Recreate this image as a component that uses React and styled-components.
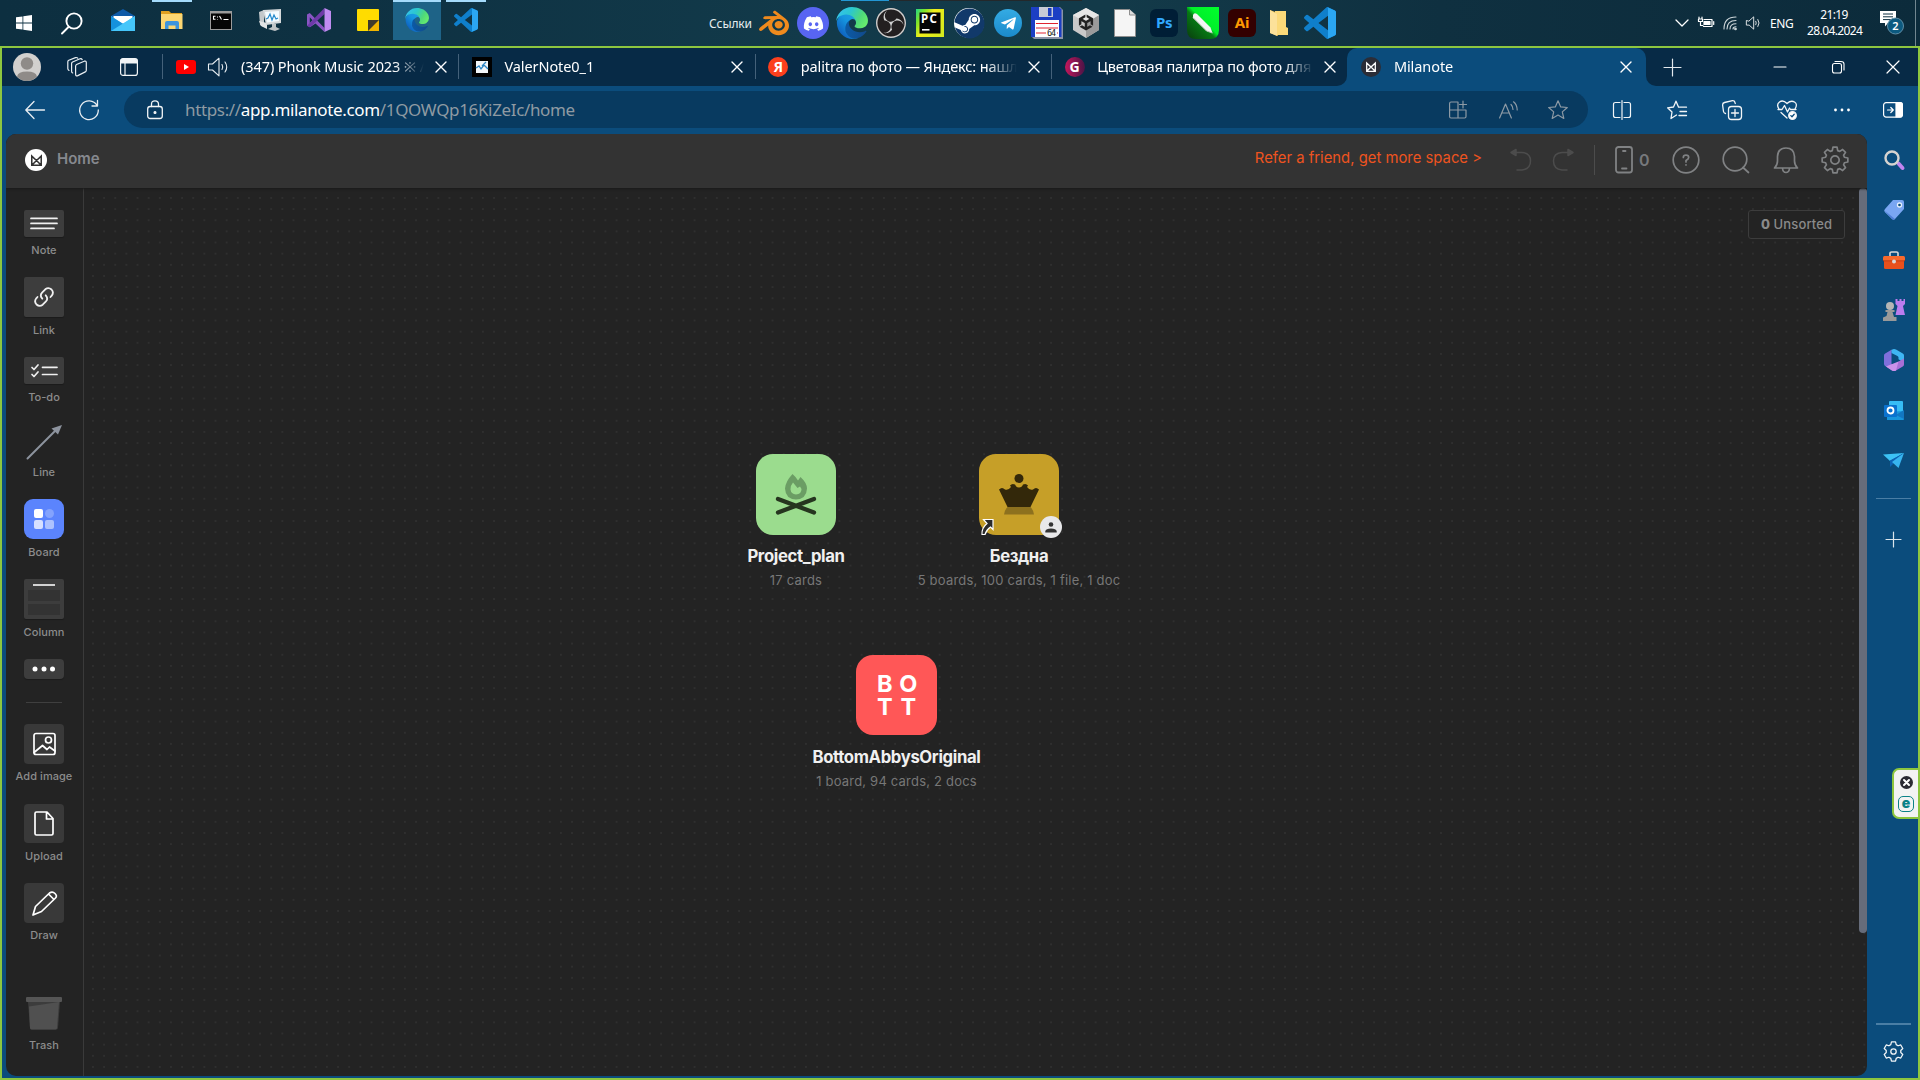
import React, { useId } from "react";
import styled, { createGlobalStyle } from "styled-components";
import { FaDiscord, FaSteam, FaTelegramPlane } from "react-icons/fa";
import { SiBlender, SiObsstudio, SiUnity } from "react-icons/si";

const SYSTEM = `"Noto Sans", "Open Sans", sans-serif`;
const PAGE = `Inter, "Noto Sans", sans-serif`;

const Global = createGlobalStyle`
  *, *::before, *::after { box-sizing: border-box; }
  html, body { margin: 0; padding: 0; background: #0d2f40; overflow: hidden; }
  svg { display: block; flex: none; overflow: visible; }
`;

/* ---------- shell ---------- */

const Desktop = styled.div`
  width: 1920px;
  height: 1080px;
  display: flex;
  flex-direction: column;
  font-family: ${SYSTEM};
  color: #fff;
  overflow: hidden;
`;

const Row = styled.div`
  display: flex;
  align-items: center;
`;

const Slot = styled.div`
  width: ${(p) => p.$w}px;
  height: 100%;
  flex: none;
  display: flex;
  align-items: center;
  justify-content: center;
`;

const Spacer = styled.div`
  flex: 1;
`;

/* ---------- taskbar ---------- */

const Taskbar = styled.header`
  height: 46px;
  flex: none;
  display: flex;
  background: linear-gradient(90deg, #0d2f40 0%, #0e3142 18%, #123a4a 42%, #133a49 58%, #0f3040 75%, #0c2b3b 100%);
`;

const TaskButton = styled.div`
  width: 48px;
  height: 40px;
  margin-right: ${(p) => (p.$flush ? 0 : 1)}px;
  flex: none;
  display: flex;
  align-items: center;
  justify-content: center;
  border-top: 2px solid ${(p) => (p.$active ? "#a5dbfb" : "transparent")};
  background: ${(p) => (p.$active ? "#1e6387" : "transparent")};
  padding-bottom: 2px;
`;

const SystemButton = styled(TaskButton)`
  border-top: 0;
  padding: 6px 0 0;
`;

const RunningButton = styled(TaskButton)`
  border-top: 0;
  padding: 0;
  background: linear-gradient(#a5dbfb, #a5dbfb) 4px 0 / 40px 2px no-repeat;
`;

const LinksBar = styled.div`
  margin-left: 218px;
  height: 46px;
  display: flex;
  align-items: center;
  background: linear-gradient(90deg, #2396d4 48px, #23282b 48px) 132px 0 / 241px 1px no-repeat;
`;

const LinksLabel = styled.span`
  width: 45.5px;
  font-size: 12px;
  letter-spacing: -0.1px;
  white-space: nowrap;
  color: #e6edf0;
`;

const AppBadge = styled.div`
  width: 28px;
  height: 28px;
  border-radius: 6px;
  background: ${(p) => p.$bg};
  color: ${(p) => p.$fg};
  font: 700 15px/26px ${SYSTEM};
  letter-spacing: -0.3px;
  text-align: center;
`;

const RoundBadge = styled.div`
  width: ${(p) => p.$d}px;
  height: ${(p) => p.$d}px;
  flex: none;
  border-radius: 50%;
  background: ${(p) => p.$bg};
  color: #fff;
  display: flex;
  align-items: center;
  justify-content: center;
`;

const Language = styled.span`
  width: 23px;
  margin: 0 14px 0 7px;
  font-size: 12px;
  letter-spacing: -0.45px;
`;

const Clock = styled.div`
  width: 54px;
  font-size: 12px;
  line-height: 16px;
  letter-spacing: -0.6px;
  text-align: center;
  white-space: nowrap;
`;

const ShowDesktop = styled.div`
  width: 5px;
  height: 46px;
  border-left: 1px solid #718690;
`;

/* ---------- browser ---------- */

const Browser = styled.section`
  flex: 1;
  min-height: 0;
  display: flex;
  flex-direction: column;
  border: 2px solid #8dc63f;
  background: #0b4c7c;
`;

const TabStrip = styled.div`
  height: 38px;
  flex: none;
  display: flex;
`;

const TabsLeft = styled.div`
  width: 1345.4px;
  display: flex;
  align-items: center;
  background: #072a46;
  border-radius: 0 0 10px 0;
`;

const WindowButtons = styled.div`
  flex: 1;
  display: flex;
  align-items: center;
  background: #072a46;
  border-radius: 0 0 0 10px;
`;

const ActiveBack = styled.div`
  width: 298.6px;
  background: linear-gradient(#072a46 12px, transparent 12px);
`;

const Tab = styled.div`
  width: 296.4px;
  height: 100%;
  flex: none;
  display: flex;
  align-items: center;
  padding-left: 13.5px;
  background: linear-gradient(#44617a, #44617a) 0 6px / 1px 25px no-repeat;
`;

const ActiveTab = styled(Tab)`
  width: 298.6px;
  padding-left: 14px;
  background: #0b4c7c;
  border-radius: 10px 10px 0 0;
`;

const TabTitle = styled.span`
  flex: 1;
  margin-left: ${(p) => p.$gap ?? 12.5}px;
  margin-top: -3px;
  font-size: 14.5px;
  line-height: 24px;
  letter-spacing: ${(p) => p.$ls ?? -0.08}px;
  white-space: nowrap;
  overflow: hidden;
  mask-image: linear-gradient(90deg, #000 calc(100% - 30px), transparent);
`;

const TabClose = styled.div`
  width: 33px;
  height: 38px;
  flex: none;
  margin-right: ${(p) => p.$mr ?? 1}px;
  display: flex;
  align-items: center;
  justify-content: center;
`;

const SmallLetter = styled.span`
  font: 700 14px/20px ${SYSTEM};
`;

const Toolbar = styled.div`
  height: 48px;
  flex: none;
  display: flex;
  padding-top: 5px;
`;

const ToolGroup = styled.div`
  height: 37px;
  display: flex;
  align-items: center;
`;

const AddressBar = styled.div`
  width: 1464px;
  height: 37px;
  border-radius: 19px;
  background: #083a60;
  display: flex;
  align-items: center;
  padding: 0 5px 0 0;
`;

const Url = styled.span`
  font-size: 17px;
  letter-spacing: -0.35px;
  color: #8f9aa3;
  white-space: nowrap;
  b { font-weight: 400; color: #fff; }
`;

const Content = styled.div`
  flex: 1;
  min-height: 0;
  display: flex;
  padding: 0 0 2px 4px;
`;

const EdgeRail = styled.aside`
  width: 51px;
  display: flex;
  flex-direction: column;
  align-items: center;
`;

const RailSlot = styled.div`
  width: 51px;
  height: ${(p) => p.$h ?? 50}px;
  padding: 2px 0 0 2px;
  flex: none;
  display: flex;
  align-items: center;
  justify-content: center;
`;

const RailRule = styled.div`
  width: 35px;
  height: ${(p) => p.$t ?? 1}px;
  flex: none;
  margin-left: 1px;
  margin-top: ${(p) => p.$mt ?? 0}px;
  background: #4a7ea5;
`;

const FloatingTab = styled.div`
  position: absolute;
  left: 1892px;
  top: 768px;
  width: 26px;
  height: 51px;
  border: 2px solid #8dc63f;
  border-right: 0;
  border-radius: 7px 0 0 7px;
  background: #f3f3f3;
  display: flex;
  flex-direction: column;
  align-items: center;
  padding: 6px 0 0 0;
  gap: 7px;
`;

const EMark = styled.div`
  width: 16px;
  height: 16px;
  border: 1.5px solid #0b8288;
  border-radius: 5px;
  color: #0b8288;
  font: 900 14px/11px ${PAGE};
  text-align: center;
`;

/* ---------- milanote page ---------- */

const Page = styled.main`
  width: 1861px;
  display: flex;
  flex-direction: column;
  border-radius: 10px;
  overflow: hidden;
  background: #232323;
  font-family: ${PAGE};
`;

const PageHeader = styled.div`
  height: 54px;
  flex: none;
  display: flex;
  align-items: center;
  padding: 0 8px 2px 19px;
  background: #333;
  box-shadow: 0 1px 2px #1a1a1a;
  z-index: 1;
`;

const Crumb = styled.span`
  margin-left: 10px;
  margin-top: -3px;
  font-size: 15px;
  font-weight: 600;
  color: #86898f;
`;

const Refer = styled.a`
  margin: -4px 18px 0 0;
  font-size: 14.8px;
  letter-spacing: 0.02px;
  color: #ee531f;
`;

const HeaderRule = styled.div`
  width: 1px;
  height: 30px;
  margin-left: 10px;
  background: #4c4c4c;
`;

const PhoneCount = styled.div`
  width: 66px;
  padding-left: 20px;
  display: flex;
  align-items: center;
  gap: 6px;
  font-size: 16px;
  font-weight: 600;
  color: #77797c;
`;

const Workspace = styled.div`
  flex: 1;
  min-height: 0;
  display: flex;
`;

const ToolRail = styled.nav`
  width: 78px;
  flex: none;
  display: flex;
  flex-direction: column;
  align-items: center;
  padding: 22px 1px 0 0;
  border-right: 1px solid #3a3a3a;
`;

const Tool = styled.div`
  width: 76px;
  display: flex;
  flex-direction: column;
  align-items: center;
  padding-bottom: ${(p) => p.$after ?? 19}px;
`;

const ToolBox = styled.div`
  width: 40px;
  height: ${(p) => p.$h ?? 40}px;
  border-radius: ${(p) => p.$r ?? 2}px;
  background: ${(p) => p.$bg ?? "#3d3d3d"};
  box-shadow: ${(p) => (p.$bg ? "none" : "0 1px 1px rgba(0,0,0,.25)")};
  display: flex;
  align-items: center;
  justify-content: center;
`;

const ToolLabel = styled.span`
  margin-top: ${(p) => p.$mt ?? 5}px;
  height: 16px;
  font-size: 11px;
  font-weight: 500;
  line-height: 16px;
  letter-spacing: 0.05px;
  color: #8c8c8c;
  white-space: nowrap;
`;

const RailDivider = styled.div`
  width: 36px;
  height: 1px;
  margin: 23px 0 21px;
  background: #3f3f3f;
`;

const Canvas = styled.div`
  position: relative;
  flex: 1;
  background: radial-gradient(circle at center, #2f2f2f 0.7px, rgba(47, 47, 47, 0) 1.4px) 3.4px 4.4px / 11.154px 11.15px;
`;

const ScrollTrack = styled.div`
  position: absolute;
  right: 0;
  top: 0;
  width: 8px;
  height: 745px;
  border-radius: 4px;
  background: #666c7a;
`;

const Unsorted = styled.button`
  position: absolute;
  right: 22px;
  top: 22px;
  width: 97px;
  height: 29px;
  padding: 0;
  border: 1px solid #3c3c3c;
  border-radius: 3px;
  background: #232323;
  color: #8a8a8a;
  font: 500 13px/25px ${PAGE};
  letter-spacing: 0.12px;
  b { font-weight: 800; }
`;

const BoardNode = styled.article`
  position: absolute;
  left: ${(p) => p.$x}px;
  top: ${(p) => p.$y}px;
  width: 240px;
  display: flex;
  flex-direction: column;
  align-items: center;
`;

const BoardTile = styled.div`
  position: relative;
  width: ${(p) => p.$w ?? 80}px;
  height: ${(p) => p.$h ?? 81}px;
  border-radius: 17px;
  background: ${(p) => p.$bg};
  display: flex;
  align-items: center;
  justify-content: center;
`;

const BoardTitle = styled.h2`
  margin: ${(p) => p.$mt ?? 9}px 0 0;
  font-size: 16.7px;
  font-weight: 700;
  line-height: 24px;
  letter-spacing: -0.36px;
  color: #f0f0f0;
`;

const BoardMeta = styled.p`
  margin: 3.5px 0 0;
  font-size: 13px;
  line-height: 16px;
  letter-spacing: 0.2px;
  color: #777;
  white-space: nowrap;
`;

const Letters = styled.div`
  display: grid;
  grid-template-columns: 23.5px 23.5px;
  grid-auto-rows: 23px;
  font: 700 23.5px/23px ${PAGE};
  text-align: center;
  color: #fff;
`;

const Shortcut = styled.div`
  position: absolute;
  left: 1px;
  bottom: -1px;
`;

const SharedBadge = styled.div`
  position: absolute;
  right: -3px;
  bottom: -3px;
  width: 22px;
  height: 22px;
  border-radius: 50%;
  background: #e8e8ea;
  display: flex;
  align-items: center;
  justify-content: center;
`;

/* ---------- drawings ---------- */

const Line = ({ w = 20, h = w, vb = `0 0 ${w} ${h}`, c = "#e9eef2", sw = 1.2, children }) => (
  <svg width={w} height={h} viewBox={vb} fill="none" stroke={c} strokeWidth={sw} strokeLinecap="round" strokeLinejoin="round">
    {children}
  </svg>
);

const Cross = ({ s = 10, sw = 1.4 }) => (
  <Line w={s} vb="0 0 10 10" sw={sw} c="#fff"><path d="M0 0l10 10M10 0L0 10" /></Line>
);

const EdgeLogo = ({ s }) => {
  const id = useId();
  return (
    <svg width={s} height={s} viewBox="-2 5 256 256">
      <defs>
        <linearGradient id={id + "a"} x1="0.1" x2="1" y1="0.6" y2="0.6"><stop offset="0" stopColor="#0c59a4" /><stop offset="1" stopColor="#114a8b" /></linearGradient>
        <linearGradient id={id + "b"} x1="0.9" x2="0.3" y1="0.2" y2="0.9"><stop offset="0" stopColor="#1b9de2" /><stop offset=".4" stopColor="#1595df" /><stop offset="1" stopColor="#0f62c0" /></linearGradient>
        <linearGradient id={id + "c"} x1="0" x2="1" y1="0.2" y2="0.6"><stop offset="0" stopColor="#35c1f1" /><stop offset=".4" stopColor="#2cc7cf" /><stop offset=".75" stopColor="#4fd97a" /><stop offset="1" stopColor="#66eb6e" /></linearGradient>
      </defs>
      <path fill={`url(#${id}a)`} d="M235.7 195.5a94 94 0 0 1-10.5 4.7 102 102 0 0 1-35.9 6.4c-47.3 0-88.5-32.5-88.5-74.3A31.5 31.5 0 0 1 117.1 105c-42.8 1.8-53.8 46.4-53.8 72.5 0 73.9 68.1 81.4 82.8 81.4 7.9 0 19.8-2.3 27-4.6l1.3-.4a128.3 128.3 0 0 0 66.6-52.8 4 4 0 0 0-5.3-5.6z" />
      <path fill={`url(#${id}b)`} d="M110.3 246.3A79.2 79.2 0 0 1 87.6 225a80.7 80.7 0 0 1 29.5-120c3.1-1.5 8.5-4.1 15.5-4a32.3 32.3 0 0 1 25.7 13 31.9 31.9 0 0 1 6.4 18.7c0-.2 24.5-79.6-80-79.6-43.9 0-80 41.7-80 78.2a130 130 0 0 0 12.1 56 128 128 0 0 0 156.4 67.1 75.5 75.5 0 0 1-62.9-8z" />
      <path fill={`url(#${id}c)`} d="M149.9 153.8c-.8 1-3.3 2.5-3.3 5.6 0 2.6 1.7 5.1 4.7 7.2 14.4 10 41.5 8.7 41.6 8.7a59.5 59.5 0 0 0 30.3-8.3A61.4 61.4 0 0 0 253.6 114c.3-22.4-8-37.3-11.3-43.9C221 28.8 175.6 5 125.8 5A128 128 0 0 0-2 131.2c.5-36.5 36.8-66 80-66 3.5 0 23.5.3 42 10 16.3 8.6 24.9 19 30.8 29.2 6.2 10.7 7.3 24.2 7.3 29.5 0 5.4-2.7 13.4-8.2 19.9z" />
    </svg>
  );
};

const CodeLogo = ({ s }) => (
  <svg width={s} height={s} viewBox="0 0 24 24">
    <path fill="#0f7fcb" d="M23.15 2.587L18.21.21a1.494 1.494 0 0 0-1.705.29l-9.46 8.63-4.12-3.128a1 1 0 0 0-1.276.057L.327 7.261A1 1 0 0 0 .326 8.74L3.899 12 .326 15.26a1 1 0 0 0 .001 1.479L1.65 17.94a1 1 0 0 0 1.276.057l4.12-3.128 9.46 8.63a1.492 1.492 0 0 0 1.704.29l4.942-2.377A1.5 1.5 0 0 0 24 20.06V3.939a1.5 1.5 0 0 0-.85-1.352zm-5.146 14.861L10.826 12l7.178-5.448v10.896z" />
    <path fill="#2ba6f2" d="M17.6 0.1L23.15 2.587Q24 3 24 3.94V20.06Q24 21 23.15 21.41L17.6 23.9Q18 23.5 18 22.5V1.5Q18 .5 17.6 .1Z" />
  </svg>
);

const StudioLogo = () => (
  <svg width="24" height="24" viewBox="0 0 24 24">
    <path fill="#8a55c4" d="M0 6.5L2.8 5 17.5 20V24L8.5 15.5 3 19.2 0 17.8ZM2.8 9.2V15L5.6 12.2Z" />
    <path fill="#6d3aa8" d="M2.8 19.2L0 17.8 17.5 0V6L5 17.5Z" />
    <path fill="#c08cf2" d="M17.5 0L24 3V21L17.5 24Z" />
  </svg>
);

const StartLogo = () => (
  <svg width="16" height="16" viewBox="0 0 16 16" fill="#fff">
    <path d="M0 2.3L6.5 1.4V7.6H0ZM7.3 1.3L16 0V7.6H7.3ZM0 8.4H6.5V14.6L0 13.7ZM7.3 8.4H16V16L7.3 14.8Z" />
  </svg>
);

const MailLogo = () => (
  <svg width="24" height="22" viewBox="0 0 24 22">
    <path d="M0 7L12 0 24 7V10H0Z" fill="#0e5aa8" />
    <path d="M2.5 7H21.5V15H2.5Z" fill="#fff" />
    <path d="M0 7L12 15 24 7V22H0Z" fill="#2fb4f2" />
    <path d="M0 7.5L24 22H0Z" fill="#1591dd" />
    <path d="M24 7L0 22H24Z" fill="#45c6fa" />
  </svg>
);

const FolderLogo = () => (
  <svg width="22" height="18" viewBox="0 0 22 18">
    <path d="M0 0H8L10 2H21V9H0Z" fill="#e0a020" />
    <path d="M0 3H21.5V18H0Z" fill="#fcd672" />
    <path d="M4 18V12Q4 10 6 10H16Q18 10 18 12V18H14.5V14.5H7.5V18Z" fill="#3d94dc" />
  </svg>
);

const TerminalLogo = () => (
  <svg width="22" height="19" viewBox="0 0 22 19">
    <rect width="22" height="19" fill="#9b9b9b" /><rect x="1" y="2.5" width="20" height="15.5" fill="#050505" />
    <g stroke="#fff" strokeWidth="1.1" fill="none"><path d="M5.5 5.3H3.5V8.3H5.5M7.5 5.5V6.5M7.5 8V8.6M9.500 5L11.5 8.500M13.5 8.5H18.5" /></g>
  </svg>
);

const MonitorLogo = () => (
  <svg width="24" height="23" viewBox="0 0 24 23">
    <path d="M1 3L6 1V18L2 16Z" fill="#c3c8cb" />
    <path d="M1 12L9 14V20L3 17Z" fill="#e2e4e5" />
    <path d="M5 1L23 0V14L8 16Z" fill="#d5d9db" />
    <path d="M7 3L21 2V12L9 13.5Z" fill="#f4fbff" />
    <path d="M8 10L10 9 12 5 14 11 16 6 18 10 20 9" stroke="#2489cc" fill="none" strokeWidth="1.2" />
    <path d="M14 15H18V18L22 20 17 22 10 20 14 18Z" fill="#bfc4c6" />
  </svg>
);

const StickyLogo = () => (
  <svg width="22" height="22" viewBox="0 0 22 22">
    <rect width="22" height="22" rx="1" fill="#ffdc00" />
    <path d="M11 11H22V22H11Z" fill="#f0b400" /><path d="M11 11H22L11 22Z" fill="#3f3a2c" />
  </svg>
);

const PyCharmLogo = () => {
  const id = useId();
  return (
    <svg width="28" height="28" viewBox="0 0 28 28">
      <defs><linearGradient id={id} x2="1" y2="0.6"><stop offset="0" stopColor="#21d789" /><stop offset=".25" stopColor="#7fe329" /><stop offset=".5" stopColor="#f2ee1a" /><stop offset="1" stopColor="#d8ea1e" /></linearGradient></defs>
      <rect width="28" height="28" fill={`url(#${id})`} /><rect x="3.5" y="3.5" width="21" height="21" fill="#050505" />
      <text x="5" y="14" fill="#fff" fontFamily="Noto Sans, sans-serif" fontWeight="700" fontSize="11.5" textLength="16">PC</text>
      <rect x="6" y="20" width="7.5" height="1.6" fill="#fff" />
    </svg>
  );
};

const FloppyLogo = () => (
  <svg width="32" height="32" viewBox="0 0 32 32">
    <path d="M1 0H29L32 3V32H3L1 30Z" fill="#8b93a5" />
    <path d="M0 0H28L30.5 2.5V30H0Z" fill="#1c3fc4" />
    <rect x="8" y="0" width="14" height="10" fill="#c7cbd6" /><rect x="17" y="1" width="3.5" height="8" fill="#1c3fc4" />
    <rect x="4" y="13" width="24" height="17" fill="#fff" />
    <path d="M5 16.5H27M5 21H27M5 26H15M26 26H27" stroke="#e02430" strokeWidth="1.1" />
    <text x="16" y="29" fill="#222" fontFamily="DejaVu Sans Mono, monospace" fontSize="8.5" textLength="9">64</text>
  </svg>
);

const FileLogo = () => (
  <svg width="22" height="28" viewBox="0 0 22 28">
    <path d="M.5 .5H15.5L21.5 6V27.5H.5Z" fill="#f5f5f5" stroke="#8e8e8e" /><path d="M15.5 .5V6H21.5" fill="#ddd" stroke="#8e8e8e" />
  </svg>
);

const CorelLogo = () => {
  const id = useId();
  return (
    <svg width="32" height="32" viewBox="0 0 32 32">
      <defs><linearGradient id={id} x1="1" x2="0" y1="0" y2="1"><stop offset="0" stopColor="#00ff2c" /><stop offset=".45" stopColor="#00f02a" /><stop offset=".55" stopColor="#067a14" /><stop offset="1" stopColor="#0a3d0d" /></linearGradient></defs>
      <path d="M0 0H32V23Q32 32 23 32H9Q0 32 0 23Z" fill={`url(#${id})`} />
      <path d="M6 8Q7 5 10 7L23.5 20.5 25.5 26 19.5 24 6 11Z" fill="#f4f4f4" /><path d="M6 10.5L19.5 24 25.5 26" stroke="#b7c4b7" fill="none" />
    </svg>
  );
};

const UnityLogo = () => (
  <svg width="28" height="30" viewBox="0 0 28 30">
    <path d="M14 0L27 7V22L14 30 1 22V7Z" fill="#c9c9c9" /><path d="M14 30L27 22V7L14 15Z" fill="#9b9b9b" /><path d="M14 0L27 7 14 15 1 7Z" fill="#e6e6e6" />
    <g transform="translate(6 6.5)"><SiUnity size={16} color="#222" /></g>
  </svg>
);

const BoxFolder = () => (
  <svg width="23" height="26" viewBox="0 0 23 26">
    <path d="M0 0L8 3V26L0 23Z" fill="#e7b84e" /><path d="M5 1H16V17L18 18V25H5Z" fill="#fbd979" /><path d="M0 0L7 4V26L0 23Z" fill="#fce19a" />
  </svg>
);

const Speaker = ({ w, h, c = "#fff", sw = 1.2 }) => (
  <Line w={w} h={h} vb="0 0 20 20" c={c} sw={sw}>
    <path d="M.5 7V13H4.5L11 18.8V1.2L4.5 7ZM14 7.5Q15.5 10 14 12.5M17 5Q20.5 10 17 15" />
  </Line>
);

const MilanoteMark = ({ s, c, sw = 1.4 }) => (
  <svg width={s} height={s} viewBox="0 0 10 10" fill="none" stroke={c} strokeWidth={sw} strokeLinejoin="miter">
    <path d="M.7 9.3V1L5 5 9.3 1V9.3ZM.7 9.3L5 5 9.3 9.3" />
  </svg>
);

const gearPath = (teeth, ro, ri) => {
  const pts = [];
  for (let i = 0; i < teeth; i++) {
    [[-0.36, ri], [-0.2, ro], [0.2, ro], [0.36, ri]].forEach(([f, r]) => {
      const a = ((i + f) * 2 * Math.PI) / teeth - Math.PI / 2;
      pts.push(`${(r * Math.cos(a)).toFixed(2)} ${(r * Math.sin(a)).toFixed(2)}`);
    });
  }
  return `M${pts.join("L")}Z`;
};

const Gear = ({ s, c, sw, teeth = 8, hub = 4 }) => (
  <Line w={s} vb="-14 -14 28 28" c={c} sw={sw}><path d={gearPath(teeth, 13, 9.8)} /><circle r={hub} /></Line>
);

const STAR = "M10 .8L12.7 6.9 19.3 7.5 14.3 11.9 15.8 18.4 10 15 4.2 18.4 5.7 11.9 .7 7.5 7.3 6.9Z";

/* ---------- sections ---------- */

const LINKS = [
  <SiBlender size={30} color="#ef8a1d" />,
  <RoundBadge $d={32} $bg="#5865f2"><FaDiscord size={21} /></RoundBadge>,
  <EdgeLogo s={32} />,
  <RoundBadge $d={30} $bg="#231f20"><SiObsstudio size={30} color="#cfcfcf" /></RoundBadge>,
  <PyCharmLogo />,
  <RoundBadge $d={30} $bg="#fff"><FaSteam size={31} color="#11396a" /></RoundBadge>,
  <RoundBadge $d={28} $bg="linear-gradient(#34abe4,#1b8acb)"><FaTelegramPlane size={17} /></RoundBadge>,
  <FloppyLogo />,
  <UnityLogo />,
  <FileLogo />,
  <AppBadge $bg="#001e36" $fg="#31a8ff">Ps</AppBadge>,
  <CorelLogo />,
  <AppBadge $bg="#330000" $fg="#ff9a00">Ai</AppBadge>,
  <BoxFolder />,
  <CodeLogo s={32} />,
];

const TaskbarSection = () => (
  <Taskbar>
    <SystemButton $flush><StartLogo /></SystemButton>
    <SystemButton>
      <Line w={22} c="#fff" sw={1.9}><circle cx="13" cy="9" r="7.6" /><path d="M7.5 15L1 21.5" /></Line>
    </SystemButton>
    <Slot $w={2} />
    <TaskButton><MailLogo /></TaskButton>
    <RunningButton><FolderLogo /></RunningButton>
    <TaskButton><TerminalLogo /></TaskButton>
    <TaskButton><MonitorLogo /></TaskButton>
    <TaskButton><StudioLogo /></TaskButton>
    <TaskButton><StickyLogo /></TaskButton>
    <TaskButton $active><EdgeLogo s={24} /></TaskButton>
    <RunningButton><CodeLogo s={24} /></RunningButton>
    <LinksBar>
      <LinksLabel>Ссылки</LinksLabel>
      {LINKS.map((icon, i) => <Slot key={i} $w={39}>{icon}</Slot>)}
    </LinksBar>
    <Spacer />
    <Row>
      <Slot $w={24}><Line w={12} h={6} c="#fff" sw={1.3}><path d="M0 0L6 6 12 0" /></Line></Slot>
      <Slot $w={23}>
        <Line w={16} h={12} c="#fff" sw={1.2}><path d="M6 2.5H14V9.5H5.5M15.7 4.5V7.5" /><rect x="6" y="4.5" width="6" height="3" fill="#fff" /><path d="M1 0V2M4 0V2M.5 2H4.5V4.5H.5ZM2.5 5V8.500H5" /></Line>
      </Slot>
      <Slot $w={26}>
        <Line w={13} h={13} c="#cdd6da" sw={1.1}><path d="M0 12Q0 0 12 0M3 12Q3 3.5 12 3.5M6 12Q6 6.8 12 6.8M9 12Q9 9.8 12 9.8" /><circle cx="11.5" cy="12" r=".8" fill="#fff" /></Line>
      </Slot>
      <Slot $w={20}><Speaker w={16} h={14} /></Slot>
      <Language>ENG</Language>
      <Clock>21:19<br />28.04.2024</Clock>
      <Slot $w={7} />
      <Slot $w={47}>
        <svg width="24" height="26" viewBox="0 0 24 26">
          <path d="M0 1H16V13H8L5 16.5V13H0Z" fill="#fff" /><path d="M3 4H13M3 6.8H13M3 9.6H13" stroke="#0d2f40" />
          <circle cx="15.5" cy="16" r="8" fill="#0c5a80" stroke="#5f8ea6" />
          <text x="15.5" y="20" textAnchor="middle" fill="#fff" fontFamily="Noto Sans, sans-serif" fontSize="11" fontWeight="600">2</text>
        </svg>
      </Slot>
      <ShowDesktop />
    </Row>
  </Taskbar>
);

const TabStripSection = () => (
  <TabStrip>
    <TabsLeft>
      <Slot $w={50}>
        <svg width="28" height="28" viewBox="0 0 28 28"><circle cx="14" cy="14" r="14" fill="#d2d0ce" /><circle cx="14" cy="10.5" r="6.2" fill="#8f8b88" /><path d="M4 23.5Q5 18.5 14 18.5T24 23.5Q20 28 14 28T4 23.5Z" fill="#8f8b88" /></svg>
      </Slot>
      <Slot $w={50}>
        <Line w={20} c="#e9eef2" sw={1.2}>
          <path d="M8.6 9.2Q8.6 8 9.6 7.5L17.2 4.2Q19.3 3.6 19.3 5.6V13.2Q19.3 14.400 18.3 14.9L10.800 18.6Q8.6 19.400 8.6 17.2ZM5.700 16Q4.6 15.600 4.6 14.200V6.600Q4.6 5.500 5.600 5L13 1.800Q14.500 1.400 15.200 2.600M2 13.500Q.8 13 .8 11.600V4.800Q.8 3.700 1.800 3.200L8.500.600Q9.900.200 10.700 1.200" />
        </Line>
      </Slot>
      <Slot $w={54}>
        <Line w={18} h={18} c="#f2f5f7" sw={1.2}><rect x=".6" y=".6" width="16.8" height="16.8" rx="2.5" /><path d="M1 2Q1 1 3 1H15Q17 1 17 3V5H1Z" fill="#f2f5f7" /><path d="M5 5V17" /></Line>
      </Slot>
      <Slot $w={6} />
      <Tab>
        <svg width="20" height="14" viewBox="0 0 20 14"><rect width="20" height="14" rx="3" fill="#f00" /><path d="M8 4L13 7 8 10Z" fill="#fff" /></svg>
        <Slot $w={12.5} />
        <Speaker w={20} h={20} sw={1.1} c="#e9eef2" />
        <TabTitle $gap={13}>(347) Phonk Music 2023 ※ / Aggressive</TabTitle>
        <TabClose><Cross /></TabClose>
      </Tab>
      <Tab>
        <svg width="20" height="20" viewBox="0 0 20 20"><rect width="20" height="20" fill="#000" /><rect x="4" y="4" width="12" height="12" fill="#f2f6f9" /><path d="M4 11L7 9 9 12 12 8 16 12M10 9L14 5" stroke="#2b85c4" fill="none" strokeWidth="1.3" /></svg>
        <TabTitle>ValerNote0_1</TabTitle>
        <TabClose><Cross /></TabClose>
      </Tab>
      <Tab>
        <RoundBadge $d={20} $bg="#fc3f1d"><SmallLetter>Я</SmallLetter></RoundBadge>
        <TabTitle $ls={-0.12}>palitra по фото — Яндекс: нашлось</TabTitle>
        <TabClose><Cross /></TabClose>
      </Tab>
      <Tab>
        <RoundBadge $d={20} $bg="linear-gradient(90deg,#c4175b,#4a1446)"><SmallLetter>G</SmallLetter></RoundBadge>
        <TabTitle $ls={-0.12}>Цветовая палитра по фото для сайта</TabTitle>
        <TabClose><Cross /></TabClose>
      </Tab>
    </TabsLeft>
    <ActiveBack>
      <ActiveTab>
        <RoundBadge $d={20} $bg="#2b2d37"><MilanoteMark s={10} c="#fff" sw={1.3} /></RoundBadge>
        <TabTitle>Milanote</TabTitle>
        <TabClose $mr={3}><Cross /></TabClose>
      </ActiveTab>
    </ActiveBack>
    <WindowButtons>
      <Slot $w={53}><Line w={17} c="#e2e8ed" sw={1.2}><path d="M8.5 0V17M0 8.5H17" /></Line></Slot>
      <Spacer />
      <Slot $w={56}><Line w={12} h={2} c="#fff" sw={1.1}><path d="M0 1H12" /></Line></Slot>
      <Slot $w={59}><Line w={12} h={12} c="#fff" sw={1.1}><rect x=".5" y="2.5" width="9" height="9.5" rx="2" /><path d="M3 .5H9Q12 .5 12 3V9" /></Line></Slot>
      <Slot $w={51}><Cross s={12} sw={1} /></Slot>
    </WindowButtons>
  </TabStrip>
);

const ToolbarSection = () => (
  <Toolbar>
    <ToolGroup>
      <Slot $w={65}><Line w={20} h={18} sw={1.3}><path d="M19.5 9H1M9 .5L.8 9 9 17.5" /></Line></Slot>
      <Slot $w={44}><Line w={20} sw={1.3}><path d="M18 5.5A9.3 9.3 0 1 0 19.3 10M18.5 .5V6H13" /></Line></Slot>
      <Slot $w={13} />
    </ToolGroup>
    <AddressBar>
      <Slot $w={61}>
        <Slot $w={1} />
        <Line w={16} h={20} c="#f2f5f7" sw={1.3}><rect x=".7" y="6.5" width="14.6" height="12" rx="2.5" /><path d="M4.5 6.5V4Q4.5 .8 8 .8T11.5 4V6.5" /><circle cx="8" cy="12.5" r=".9" fill="#fff" /></Line>
      </Slot>
      <Url>https://<b>app.milanote.com</b>/1QOWQp16KiZeIc/home</Url>
      <Spacer />
      <Slot $w={50}><Line w={18} h={18} c="#8d9aa5" sw={1.2}><path d="M9 1H2Q.6 1 .6 2.5V15.5Q.6 17 2 17H15.5Q17 17 17 15.5V9H.6M9 1V17M14 .0V7M10.5 3.5H17.5" /></Line></Slot>
      <Slot $w={50}><Line w={19} h={18} c="#8d9aa5" sw={1.2}><path d="M.6 17L6.5 3 12.4 17M2.8 12H10.2M12 3.5Q14 5.5 14 8.5M14.5 .8Q18 3.5 18.2 9" /></Line></Slot>
      <Slot $w={50}><Line w={20} c="#8d9aa5" sw={1.2}><path d={STAR} /></Line></Slot>
    </AddressBar>
    <Slot $w={6.5} />
    <ToolGroup>
      <Slot $w={55}><Line w={18} h={20} c="#f2f5f7" sw={1.2}><path d="M7 2.5H2.5Q.5 2.5 .5 4.5V15.5Q.5 17.5 2.5 17.5H7M11 2.5H15.5Q17.5 2.5 17.5 4.5V15.5Q17.5 17.5 15.5 17.5H11M9 .5V19.5" /></Line></Slot>
      <Slot $w={55}><Line w={20} c="#f2f5f7" sw={1.3}><path d="M11.5 7L9 1.2 6.5 7 .6 7.8 5 12 4 18.5 9.5 15M11.5 7.2H19.5M13 11.5H19.5M12 15.5H19.5" /></Line></Slot>
      <Slot $w={55}><Line w={20} c="#f2f5f7" sw={1.3}><rect x="6.5" y="6.5" width="13" height="13" rx="3" /><path d="M13 9.5V16.5M9.5 13H16.5M3.5 13.5Q1.7 13 1.5 11.5L.6 5Q.5 3 2.5 2.5L10.5 .6Q12.5 .5 13 2.5L13.3 3.5" /></Line></Slot>
      <Slot $w={55}>
        <Line w={20} c="#f2f5f7" sw={1.3}><path d="M2 9Q-1 4.5 2.5 2T10 3.5Q14 .0 17.5 2T18 9M1 9.5H5L7.5 5.5 10.5 12 12.5 8 13.5 9.5H19M4 12.5L10 18" /><circle cx="15.5" cy="15.5" r="3.8" fill="#fff" /><path d="M13.8 15.6L15 16.8 17.2 14.3" stroke="#0b4c7c" /></Line>
      </Slot>
      <Slot $w={55}><svg width="16" height="4" viewBox="0 0 16 4" fill="#fff"><circle cx="1.5" cy="2" r="1.4" /><circle cx="8" cy="2" r="1.4" /><circle cx="14.5" cy="2" r="1.4" /></svg></Slot>
      <Slot $w={47}><Line w={20} h={16} c="#fff" sw={1.2}><rect x=".6" y=".6" width="18.8" height="14.5" rx="2.5" /><path d="M13 .6H17Q19.4 .6 19.4 3V12.5Q19.4 15 17 15H13Z" fill="#fff" /><path d="M4.5 8H10M7.8 5.5L10.3 8 7.8 10.5" /></Line></Slot>
    </ToolGroup>
  </Toolbar>
);

const GREY = "#808284";

const HeaderSection = () => (
  <PageHeader>
    <RoundBadge $d={22} $bg="#fff"><MilanoteMark s={11} c="#333" /></RoundBadge>
    <Crumb>Home</Crumb>
    <Spacer />
    <Refer>Refer a friend, get more space &gt;</Refer>
    <Slot $w={42}><Line w={22} h={22} c="#4c4c4c" sw={1.5}><path d="M5 3.5H12Q20.5 4 20.5 12T12 21H7" /><path d="M1 3.5L6 .5V6.5Z" fill="#4c4c4c" /></Line></Slot>
    <Slot $w={42}><Line w={22} h={22} c="#4c4c4c" sw={1.5}><path d="M17 3.5H10Q1.5 4 1.5 12T10 21H15" /><path d="M21 3.5L16 .5V6.5Z" fill="#4c4c4c" /></Line></Slot>
    <HeaderRule />
    <PhoneCount>
      <Line w={18} h={28} c={GREY} sw={1.8}><rect x="1" y="1" width="16" height="25.5" rx="2.5" /><path d="M8 5H10.5M7 22.5H11.5" /></Line>
      0
    </PhoneCount>
    <Slot $w={50}><Line w={28} c={GREY} sw={1.7}><circle cx="14" cy="14" r="12.8" /><path d="M11.3 11.5Q11.3 9.2 14 9.2T16.7 11.5Q16.7 13 14 14.5V16M14 18.8V19" /></Line></Slot>
    <Slot $w={50}><Line w={28} c={GREY} sw={1.7}><circle cx="13" cy="13" r="11.8" /><path d="M21 21.5L26.5 26.5" /></Line></Slot>
    <Slot $w={50}><Line w={26} h={28} c={GREY} sw={1.7}><path d="M1.5 22Q4.5 19 4.5 15V10.5Q5 2 13 2T21.5 10.5V15Q21.5 19 24.5 22ZM9.5 22.5Q10 26.5 13 26.5T16.5 22.5" /></Line></Slot>
    <Slot $w={48}><Gear s={28} c={GREY} sw={1.7} hub={4.2} /></Slot>
  </PageHeader>
);

const ToolsSection = () => (
  <ToolRail>
    <Tool><ToolBox $h={27}><Line w={28} h={12} c="#f0f0f0" sw={1.7}><path d="M1 .4H27M1 5.4H27M1 10.400H24" /></Line></ToolBox><ToolLabel>Note</ToolLabel></Tool>
    <Tool><ToolBox>
      <Line w={20} c="#f0f0f0" sw={1.8}><path d="M8.3 11.7Q5.3 8.3 8.3 5.3L11.3 2.3Q14.5 -.2 17.5 2.5 20.2 5.5 17.7 8.7L16.5 10M11.7 8.3Q14.7 11.7 11.7 14.7L8.7 17.7Q5.5 20.2 2.5 17.5 -.2 14.5 2.3 11.3L3.5 10" /></Line>
    </ToolBox><ToolLabel>Link</ToolLabel></Tool>
    <Tool><ToolBox $h={27}><Line w={27} h={14} c="#f0f0f0" sw={1.7}><path d="M1 3.500L3 5.500 7 1M1 10.500L3 12.500 7 8M11.5 3.300H26M11.5 10.500H26" /></Line></ToolBox><ToolLabel>To-do</ToolLabel></Tool>
    <Tool>
      <svg width="36" height="35" viewBox="0 0 36 35"><path d="M1.500 34.5L29 7" stroke="#8d939e" strokeWidth="2" strokeLinecap="round" /><path d="M36 1L32 10.5 25.5 4.5Z" fill="#8d939e" /></svg>
      <ToolLabel>Line</ToolLabel>
    </Tool>
    <Tool><ToolBox $r={9} $bg="#5b84fd">
      <svg width="20" height="20" viewBox="0 0 20 20" fill="#fff"><rect width="9" height="9" rx="2" /><circle cx="15.5" cy="4.5" r="4.5" opacity=".25" /><rect y="11" width="9" height="9" rx="2" opacity=".75" /><rect x="11" y="11" width="9" height="9" rx="2" opacity=".5" /></svg>
    </ToolBox><ToolLabel>Board</ToolLabel></Tool>
    <Tool><ToolBox>
      <svg width="40" height="40" viewBox="0 0 40 40"><path d="M9 6H31" stroke="#f0f0f0" strokeWidth="1.7" /><path d="M4 11H36V22H4ZM4 25H36V36H4Z" fill="#333" /></svg>
    </ToolBox><ToolLabel>Column</ToolLabel></Tool>
    <ToolBox $h={20} $r={4}><svg width="24" height="6" viewBox="0 0 24 6" fill="#fff"><circle cx="3" cy="3" r="2.5" /><circle cx="12" cy="3" r="2.5" /><circle cx="20.500" cy="3" r="2.5" /></svg></ToolBox>
    <RailDivider />
    <Tool><ToolBox $r={4} $bg="#393939"><Line w={23} c="#fff" sw={1.7}><rect x="1" y=".5" width="21" height="21" rx="2" /><circle cx="15.5" cy="7" r="3" /><path d="M1 19.500L9.5 12.500 14 16.500 16.5 14 22 18" /></Line></ToolBox><ToolLabel $mt={4}>Add image</ToolLabel></Tool>
    <Slot $w={1} as={RailGap} />
    <Tool><ToolBox $h={39} $r={4} $bg="#393939"><Line w={20} h={25} c="#fff" sw={1.7}><path d="M1 2.5Q1 1 2.5 1H13L19 7.500V22.5Q19 24 17.5 24H2.5Q1 24 1 22.5ZM12.5 1.5V8H18.5" /></Line></ToolBox><ToolLabel>Upload</ToolLabel></Tool>
    <Tool $after={53}><ToolBox $r={4} $bg="#393939"><Line w={25} c="#fff" sw={1.7}><path d="M1 24L3.5 15.5 17.5 2Q20.5 0 23 2.5T23.5 7L9.5 20.5ZM16.5 3L22 8.5" /></Line></ToolBox><ToolLabel $mt={4}>Draw</ToolLabel></Tool>
    <Tool>
      <svg width="36" height="35" viewBox="0 0 36 35"><path d="M2 6H34L32 32Q31.8 33.5 30 33.5H6Q4.2 33.5 4 32Z" fill="#3c3c3c" /><path d="M3 10.5L33 6 31 32Q30.8 33.5 29 33.5H6Q4.2 33.5 4 32Z" fill="#505050" /><rect y="1" width="36" height="5" rx="1" fill="#555" /></svg>
      <ToolLabel $mt={6}>Trash</ToolLabel>
    </Tool>
  </ToolRail>
);

const RailGap = styled.div`
  height: 1px;
`;

const CanvasSection = () => (
  <Canvas>
    <Unsorted><b>0</b> Unsorted</Unsorted>
    <BoardNode $x={592} $y={266}>
      <BoardTile $bg="#9bdc8e">
        <svg width="40" height="41" viewBox="0 0 40 41">
          <path fillRule="evenodd" fill="#6b9d64" d="M16.5 0Q20 3 22 6.5L24.5 3Q31 9 31 14.5 30.5 25 20 25.5 9.5 25 9 14.5 9.5 7.5 16.5 0ZM17 8.5Q14 12 14.500 15.5 15 20 20 20.5 25.5 20 25.5 15L24 12.5 21.5 14Z" />
          <path d="M2 25L38 38.5M38 25L2 38.5" stroke="#26351f" strokeWidth="4.3" strokeLinecap="round" />
        </svg>
      </BoardTile>
      <BoardTitle>Project_plan</BoardTitle>
      <BoardMeta>17 cards</BoardMeta>
    </BoardNode>
    <BoardNode $x={815} $y={266}>
      <BoardTile $bg="#c69f28">
        <svg width="40" height="41" viewBox="0 0 40 41">
          <circle cx="20" cy="4.5" r="4.5" fill="#33280a" />
          <path d="M0 15.5Q3 12.5 6 15.5 9.5 16.5 12 13L11 11.5Q13 9 16 10.5 17 13.5 20 13.5T24 10.5Q27 9 29 11.5L28 13Q30.5 16.5 34 15.5 37 12.5 40 15.5L31.5 33H8.5Z" fill="#33280a" />
          <path d="M8.5 33H31.5Q34.5 36 35 40.5H5Q5.5 36 8.5 33Z" fill="#8d711e" />
        </svg>
        <Shortcut>
          <svg width="14" height="18" viewBox="0 0 14 18"><path d="M3.5 1.5H13V11.5L10.5 9Q6.5 11.5 5 16.5H2Q1.5 10 7 5.5Z" fill="#2a2a2a" stroke="#fff" strokeWidth="1.2" /></svg>
        </Shortcut>
        <SharedBadge>
          <svg width="12" height="11" viewBox="0 0 12 11" fill="#333"><circle cx="6" cy="2.5" r="2.3" /><path d="M.3 10.5V9Q1 6.5 6 6.5T11.7 9V10.5Z" /></svg>
        </SharedBadge>
      </BoardTile>
      <BoardTitle>Бездна</BoardTitle>
      <BoardMeta>5 boards, 100 cards, 1 file, 1 doc</BoardMeta>
    </BoardNode>
    <BoardNode $x={692.5} $y={467}>
      <BoardTile $bg="#ff5757" $w={81} $h={80}>
        <Letters><span>B</span><span>O</span><span>T</span><span>T</span></Letters>
      </BoardTile>
      <BoardTitle $mt={10}>BottomAbbysOriginal</BoardTitle>
      <BoardMeta>1 board, 94 cards, 2 docs</BoardMeta>
    </BoardNode>
    <ScrollTrack />
  </Canvas>
);

const RailSection = () => (
  <EdgeRail>
    <RailSlot>
      <svg width="20" height="20" viewBox="0 0 20 20"><path d="M14.5 13.5L18.5 18" stroke="#c084f0" strokeWidth="4" strokeLinecap="round" /><circle cx="8" cy="8" r="6.5" fill="none" stroke="#d6d3d0" strokeWidth="2.4" /></svg>
    </RailSlot>
    <RailSlot>
      <svg width="20" height="20" viewBox="0 0 20 20"><path d="M9 0H18Q20 0 20 2V9L11 19Q9.5 20.5 8 19L.8 12Q-.5 10.5 1 9Z" fill="#79a6f2" /><path d="M.5 10.5L11 19Q9.5 20.5 8 19Z" fill="#4f7fd8" /><circle cx="15.500" cy="5" r="2" fill="#0b4c7c" stroke="#e8f0fb" strokeWidth="1.3" /></svg>
    </RailSlot>
    <RailSlot>
      <svg width="22" height="18" viewBox="0 0 22 18"><path d="M7 5V2Q7 1 8.5 1H13.5Q15 1 15 2V5" fill="none" stroke="#d7d7d7" strokeWidth="1.6" /><rect x="1" y="5" width="20" height="13" rx="1.5" fill="#e8501c" /><rect y="5" width="22" height="5" rx="1.5" fill="#f8692c" /><path d="M0 9.8H22" stroke="#b53411" strokeWidth=".8" /><circle cx="11" cy="10.5" r="2" fill="#d8d8d8" /></svg>
    </RailSlot>
    <RailSlot>
      <svg width="22" height="22" viewBox="0 0 22 22"><path d="M12.5 0H14.5V2H16.5V0H18.5V2H20.5V0H22V5L20 7 21.5 14 22 16H12.5L14.5 7 12.5 5Z" fill="#bb7cee" /><circle cx="7" cy="7" r="4" fill="#b5b5b5" /><path d="M2.5 11H11.5V13H9.5L11 18H13.5V22H0V18.5L3.5 17 4.5 13H2.5Z" fill="#999" /></svg>
    </RailSlot>
    <RailSlot>
      <svg width="20" height="22" viewBox="0 0 20 22">
        <path d="M8 0.5L1.2 4.5Q0 5.200 0 6.500V15Q0 16.500 1.500 17.300L3.500 18.300 7.500 15.800V5Q7.500 2 8 .5Z" fill="#7f6fdc" />
        <path d="M7.6 1Q9.800 -.6 12 .6L18.800 4.500Q20 5.200 20 6.500V13.500L14.500 10.300V8.600Q14.500 7.500 13.500 7L7.500 4Z" fill="#3fb6f3" />
        <path d="M14.500 12.500L20 9.500V15.500Q20 16.900 18.800 17.600L12 21.400Q10 22.500 8 21.400L2 17.500 7.500 15.300Q9.800 16 12 14.800Z" fill="#a86fd6" />
        <path d="M2 17.500L12 13.500 14.500 12.500 12 21.400Q10 22.500 8 21.400Z" fill="#cb92ea" />
      </svg>
    </RailSlot>
    <RailSlot>
      <svg width="20" height="19" viewBox="0 0 20 19"><rect x="5" width="14" height="13" rx="1" fill="#37bdf5" /><path d="M3 11L20 10V18Q20 19 19 19H3Z" fill="#1795dc" /><path d="M12 14L20 9V18Z" fill="#1277c2" /><rect y="4" width="13" height="12" rx="1" fill="#0a72cf" /><circle cx="6.5" cy="9.5" r="3" stroke="#fff" strokeWidth="1.8" fill="none" /></svg>
    </RailSlot>
    <RailSlot>
      <svg width="21" height="15" viewBox="0 0 21 15"><path d="M0 1.5L21 0 7 8Z" fill="#3cc2f5" /><path d="M7 7.5L21 0 7 14Z" fill="#0d62b5" /><path d="M9 9L21 0 15.5 15Z" fill="#37b4f0" /></svg>
    </RailSlot>
    <RailRule $mt={14} />
    <RailSlot $h={78}><Line w={15} c="#dbe5ec" sw={1.2}><path d="M7.5 0V15M0 7.5H15" /></Line></RailSlot>
    <Spacer />
    <RailRule $t={2} />
    <RailSlot $h={51}><Gear s={21} c="#f2f5f7" sw={1.7} teeth={6} hub={3.6} /></RailSlot>
  </EdgeRail>
);

export default function App() {
  return (
    <>
      <Global />
      <Desktop>
        <TaskbarSection />
        <Browser>
          <TabStripSection />
          <ToolbarSection />
          <Content>
            <Page>
              <HeaderSection />
              <Workspace>
                <ToolsSection />
                <CanvasSection />
              </Workspace>
            </Page>
            <RailSection />
          </Content>
        </Browser>
        <FloatingTab>
          <svg width="13" height="13" viewBox="0 0 13 13"><circle cx="6.5" cy="6.5" r="6.5" fill="#2b2b33" /><path d="M4 4L9 9M9 4L4 9" stroke="#fff" strokeWidth="2" strokeLinecap="round" /></svg>
          <EMark>e</EMark>
        </FloatingTab>
      </Desktop>
    </>
  );
}
